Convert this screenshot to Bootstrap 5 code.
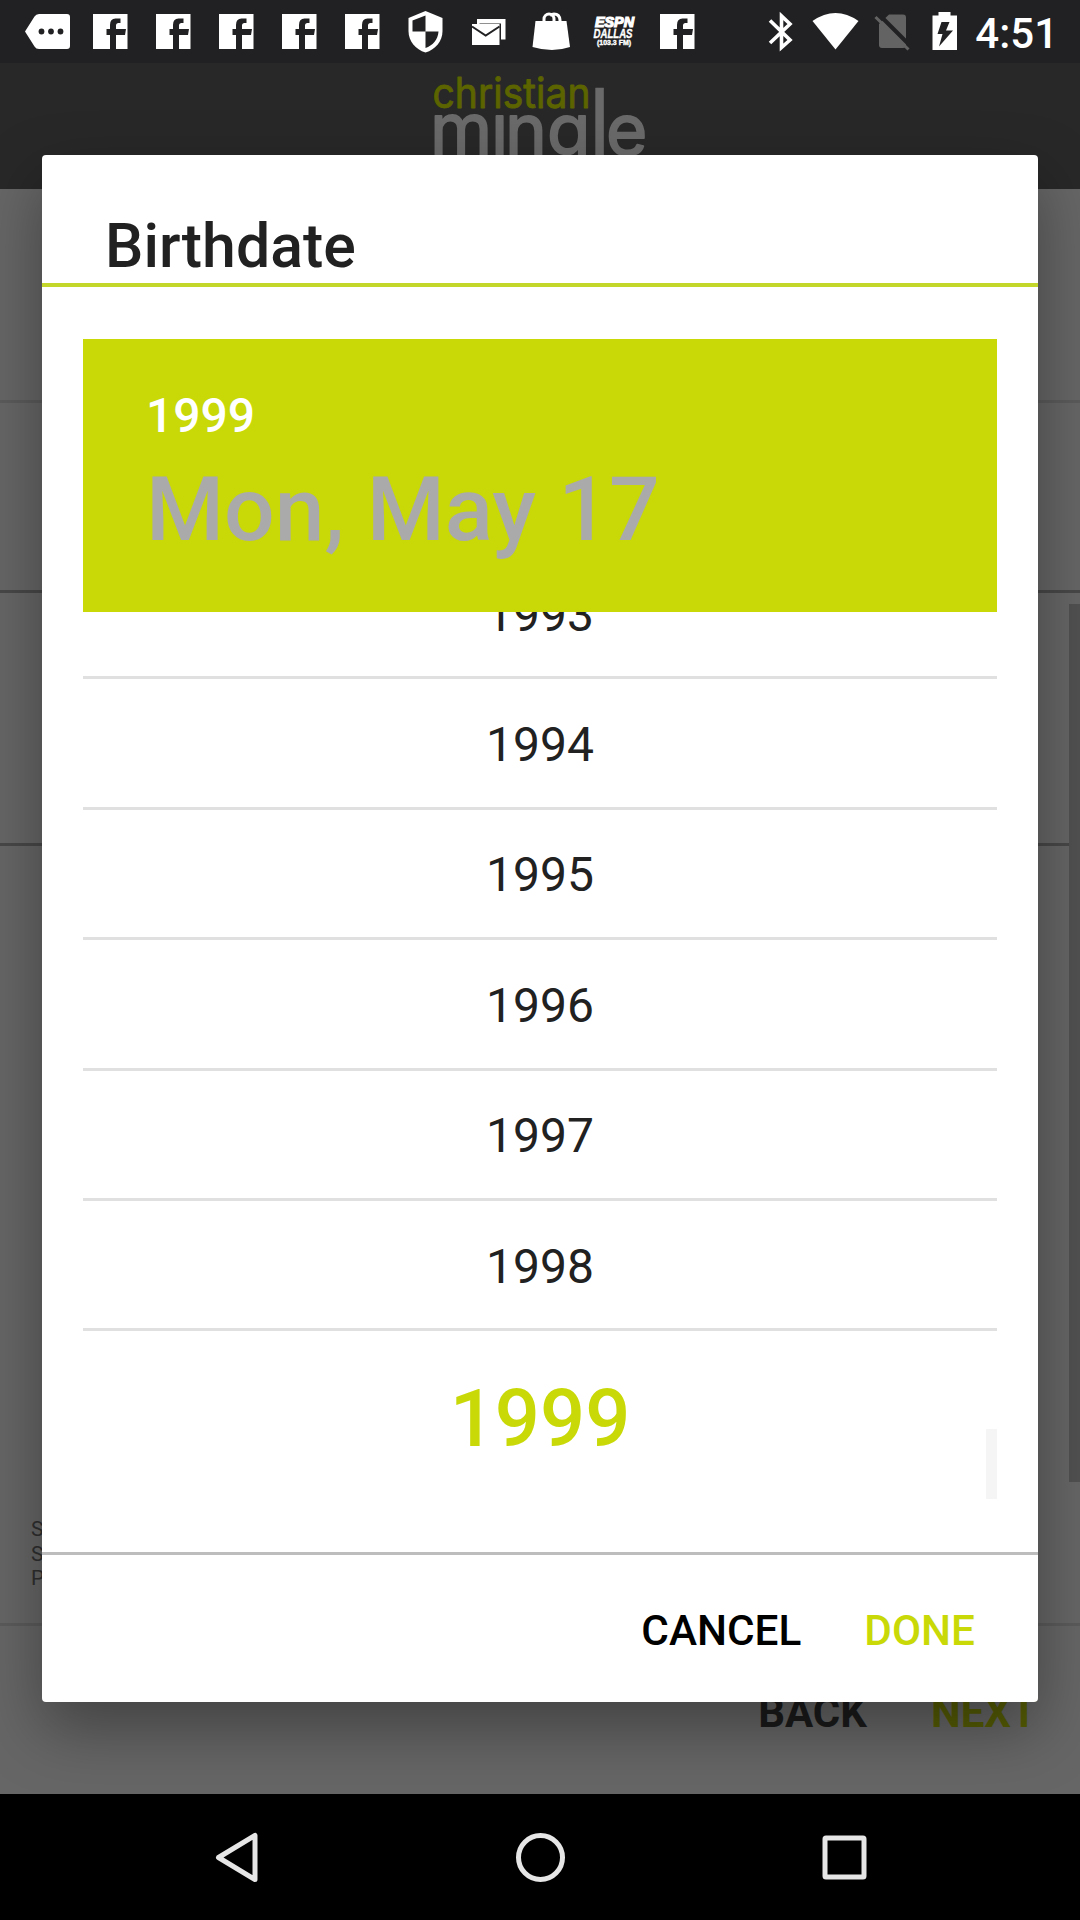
<!DOCTYPE html>
<html lang="en">
<head>
<meta charset="utf-8">
<meta name="viewport" content="width=device-width, initial-scale=1">
<title>Birthdate</title>
<link rel="stylesheet" href="https://cdn.jsdelivr.net/npm/bootstrap@5.3.0/dist/css/bootstrap.min.css">
<style>
:root{--lime:#c8d907}
body{width:1080px;height:1920px;overflow:hidden;font-family:Roboto,"Noto Sans",sans-serif;background:#666;color:#212121;line-height:1}
.statusbar{height:63px;background:#212123;z-index:5;padding-left:16px;padding-right:22px}
.statusbar svg{display:block;flex:none}
.clock{font-size:42px;font-weight:500;color:#fff;line-height:63px;padding-top:3px}
.brandbar{height:126px;background:#282828}
.field-a{height:214px;border-bottom:3px solid #5b5b5b}
.field-b{height:190px;border-bottom:3px solid #484848}
.field-c{height:253px;border-bottom:3px solid #484848}
.field-d{height:780px;border-bottom:3px solid #5b5b5b;padding:0 0 32px 31px}
.legal{font-size:21px;line-height:24.7px;color:#2f2f2f}
.pagenav{height:168px;padding:66px 43px 0 0;gap:64px;font-size:42px;font-weight:700;color:#1b1b1b}
.pagenav .next{color:#565d04}
.page-thumb{right:0;top:604px;width:11px;height:878px;background:#515151}
.softkeys{height:126px;background:#000;z-index:5}
.dialog{left:42px;top:155px;width:996px;height:1547px;border:0;border-radius:4px;box-shadow:0 26px 64px rgba(0,0,0,.36);z-index:3;background:#fff}
.dialog-title{height:132px;border-bottom:4px solid #c3d62a;padding:62px 63px 0;font-size:60.8px;font-weight:500;line-height:60px}
.picker{margin:52px 41px 0}
.datehead{height:273px;background:var(--lime);padding:53px 63px 0;position:relative}
.datehead .yr{font-size:48px;font-weight:500;color:#fff;line-height:48px}
.datehead .day{font-size:89.300px;font-weight:500;color:#aaa;line-height:90px;margin-top:25px}
.years{height:887px;overflow:hidden}
.years .list-group{margin-top:-63px}
.years .list-group-item{height:130.4px;border:0;border-bottom:3px solid #e0e0e0;padding:4px 0 0;font-size:48px;color:#212121;background:none}
.years .picked{height:171px;border-bottom:0;font-size:79.500px;font-weight:500;color:var(--lime)}
.year-thumb{right:41px;top:1274px;width:11px;height:70px;background:#f5f5f5}
.actions{margin-top:53px;height:150px;border-top:3px solid #bdbdbd;padding:5px 63px 0 0;gap:63px;font-size:42.300px;font-weight:500}
.actions .btn{font:inherit;border:0;padding:0;color:#000}
.actions .btn-done{color:var(--lime)}
</style>
</head>
<body class="position-relative d-flex flex-column">

<svg width="0" height="0" class="position-absolute">
  <defs>
    <g id="fb"><path fill="#fff" d="M14 14h34.500v35h-11.500v-14h9l1-6h-10v-3.500q0-2.500 2.500-2.500h2v-4.500h-5q-5.500 0-5.500 6.500v4h-3.500v6h3.500v14H14z"/></g>
  </defs>
</svg>

<header class="statusbar position-relative d-flex align-items-center">
  <svg width="63" height="63"><path fill="#fff" d="M9 31.500 18.500 16.500Q20 14 23 14H51q3 0 3 3V46q0 3-3 3H23q-3 0-4.500-2.500z"/><g fill="#212123"><circle cx="25.500" cy="31.500" r="2.900"/><circle cx="35" cy="31.500" r="2.900"/><circle cx="44.500" cy="31.500" r="2.900"/></g></svg>
  <svg width="63" height="63"><use href="#fb"/></svg>
  <svg width="63" height="63"><use href="#fb"/></svg>
  <svg width="63" height="63"><use href="#fb"/></svg>
  <svg width="63" height="63"><use href="#fb"/></svg>
  <svg width="63" height="63"><use href="#fb"/></svg>
  <svg width="63" height="63"><path fill="#fff" d="M31.500 11 48.500 18v13c0 10-7 18.500-17 21.500C21.500 49.500 14.500 41 14.500 31V18z"/><path fill="#212123" d="M31.500 15.500V31.500H18.500V20.500zM31.500 31.500H44.500C44 40 38.500 45.500 31.500 48z"/></svg>
  <svg width="63" height="63"><path fill="#fff" d="M20 19h28.500v20.500h-4.500V23.500H22.500V24H20z"/><path fill="#fff" d="M15 24h27.500v21H15z"/><path fill="none" stroke="#212123" stroke-width="2" d="M15 26.500 28.700 35.500 42.500 26.500"/></svg>
  <svg width="63" height="63"><path fill="#fff" d="M15.500 21H46.500L50 47Q32.500 53 12.500 47z"/><path fill="none" stroke="#fff" stroke-width="3" d="M24 22v-3a5 5 0 0 1 10 0v3M30 15.500q2-1.500 4-1.500 5.500 0 6 6v2"/></svg>
  <svg width="63" height="63" font-family="Liberation Sans, sans-serif" font-weight="700" font-style="italic" fill="#fff"><text x="12" y="26.500" font-size="14" textLength="39" lengthAdjust="spacingAndGlyphs" stroke="#fff" stroke-width="1.200">ESPN</text><text x="10.500" y="38" font-size="13.500" textLength="39" lengthAdjust="spacingAndGlyphs" stroke="#fff" stroke-width=".4">DALLAS</text><text x="14" y="45" font-size="7" font-style="normal" textLength="34" lengthAdjust="spacingAndGlyphs" stroke="#fff" stroke-width=".4">(103.3 FM)</text></svg>
  <svg width="63" height="63"><use href="#fb"/></svg>
  <svg class="ms-auto" width="54" height="63"><path fill="none" stroke="#fff" stroke-width="3.600" d="M15 20.500 35 40 26.500 47.500V16L35 24 15 43"/></svg>
  <svg width="54" height="63"><path fill="#fff" d="M3.500 21Q26.500 5 49.500 21L26.500 49.500z"/></svg>
  <svg width="54" height="63"><path fill="#636363" d="M26 14.500H40q3 0 3 3V45q0 3-3 3H19q-3 0-3-3V24z"/><path stroke="#212123" stroke-width="4" d="M15 13.500 49 47.500"/><path stroke="#636363" stroke-width="3" d="M12.500 17 45.500 49.500"/></svg>
  <svg width="54" height="63"><path fill="#fff" d="M21.500 12h12v3.500H40V50H15.500V15.500h6z"/><path fill="#212123" d="M24.500 22h8l-3.500 8.500h7L22 46.500 25.500 34H20.500z"/></svg>
  <span class="clock ms-1">4:51</span>
</header>

<main class="flex-grow-1 d-flex flex-column">
  <div class="brandbar d-flex justify-content-center">
    <svg width="230" height="126" font-family="Inter, Roboto, sans-serif" stroke-linejoin="round">
      <text x="7.500" y="45" font-size="42" fill="#5c6400" stroke="#5c6400" stroke-width=".9" textLength="158" lengthAdjust="spacingAndGlyphs">christian</text>
      <g font-size="71" fill="#6a6a6a" stroke="#6a6a6a" stroke-width="1.800"><text x="5 66 80 122" y="92">mıng</text><text x="163.500" y="92" font-size="92" stroke-width=".4">l</text><text x="181" y="92">e</text></g>
    </svg>
  </div>
  <div class="field-a"></div>
  <div class="field-b"></div>
  <div class="field-c"></div>
  <div class="field-d d-flex flex-column justify-content-end legal">
    <span>S</span><span>S</span><span>P</span>
  </div>
  <div class="pagenav d-flex justify-content-end"><span>BACK</span><span class="next">NEXT</span></div>
  <div class="page-thumb position-absolute"></div>
</main>

<section class="dialog position-absolute card" role="dialog" aria-label="Birthdate">
  <div class="dialog-title">Birthdate</div>
  <div class="picker">
    <div class="datehead"><div class="yr">1999</div><div class="day">Mon, May 17</div></div>
    <div class="years">
      <div class="list-group list-group-flush">
        <div class="list-group-item d-flex align-items-center justify-content-center">1993</div>
        <div class="list-group-item d-flex align-items-center justify-content-center">1994</div>
        <div class="list-group-item d-flex align-items-center justify-content-center">1995</div>
        <div class="list-group-item d-flex align-items-center justify-content-center">1996</div>
        <div class="list-group-item d-flex align-items-center justify-content-center">1997</div>
        <div class="list-group-item d-flex align-items-center justify-content-center">1998</div>
        <div class="list-group-item picked d-flex align-items-center justify-content-center">1999</div>
      </div>
    </div>
  </div>
  <div class="year-thumb position-absolute"></div>
  <div class="actions d-flex justify-content-end align-items-center">
    <button class="btn">CANCEL</button><button class="btn btn-done">DONE</button>
  </div>
</section>

<footer class="softkeys position-relative d-flex justify-content-center align-items-center">
  <svg width="700" height="126" fill="none" stroke="#e6e6e6" stroke-width="5" stroke-linejoin="round"><path d="M65 41.500V85.500L28.500 63.500z"/><circle cx="350.500" cy="63.500" r="22"/><rect x="635" y="44" width="39" height="39" rx="1"/></svg>
</footer>
<script src="https://cdn.jsdelivr.net/npm/bootstrap@5.3.0/dist/js/bootstrap.bundle.min.js"></script>
</body>
</html>
